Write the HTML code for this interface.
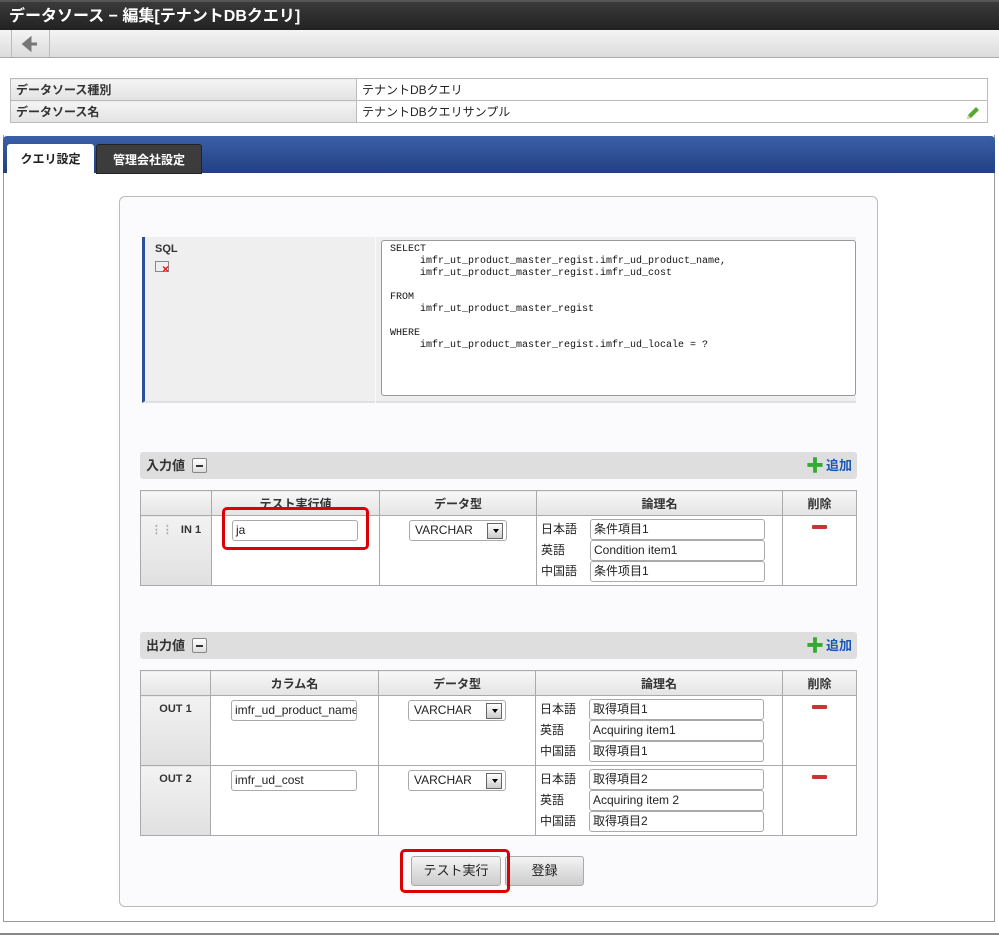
<!DOCTYPE html>
<html><head><meta charset="utf-8"><style>
*{box-sizing:border-box;margin:0;padding:0}
body{width:999px;height:935px;background:#fff;position:relative;overflow:hidden;font-family:"Liberation Sans","Noto Sans CJK JP",sans-serif;font-size:12px;color:#222}
.a{position:absolute}
.title{left:0;top:0;width:999px;height:30px;background:linear-gradient(#3a3a3a,#222);color:#fff;font-size:16px;font-weight:bold;line-height:30px;padding-left:9px;border-top:2px solid #555}
.tool{left:0;top:30px;width:999px;height:28px;background:linear-gradient(#f4f4f4,#dcdcdc);border-bottom:1px solid #aaa}
.back{left:11px;top:30px;width:39px;height:27px;border-left:1px solid #bbb;border-right:1px solid #bbb}
table{border-collapse:collapse}
.info{left:10px;top:78px;width:978px}
.info td{border:1px solid #bbb;height:22px;padding-left:5px;font-size:12px}
.info td.l{background:linear-gradient(#f5f5f5,#e2e2e2);font-weight:bold;width:346px;color:#333}
.frame{left:3px;top:135px;width:992px;height:787px;border:1px solid #999;border-top:none}
.tabbar{left:3px;top:136px;width:992px;height:37px;background:linear-gradient(#3b60a8,#223f82);border-radius:4px 4px 0 0}
.tab{top:144px;height:30px;font-weight:bold;font-size:12px;line-height:30px;text-align:center;border-radius:3px 3px 0 0}
.panel{left:119px;top:196px;width:759px;height:711px;background:#fbfbfe;border:1px solid #bbb;border-radius:6px}
.sqll{left:142px;top:237px;width:233px;height:166px;background:#efefef;border-left:3px solid #2f4e99;border-bottom:2px solid #e0e0e0;padding:6px 10px;font-size:11px;font-weight:bold;color:#333}
.sqlr{left:376px;top:237px;width:480px;height:166px;background:#efefef;border-bottom:2px solid #e0e0e0}
.ta{left:381px;top:240px;width:475px;height:156px;background:#fff;border:1px solid #999;border-radius:3px;font-family:"Liberation Mono",monospace;font-size:10px;line-height:12px;padding:3px 8px;white-space:pre;color:#111}
.sh{left:140px;height:27px;width:717px;background:#dedede;border-radius:3px;font-weight:bold;font-size:13px;line-height:27px;padding-left:6px;color:#333}
.mini{display:inline-block;width:15px;height:15px;border:1px solid #888;background:linear-gradient(#fff,#ddd);vertical-align:-3px;margin-left:3px;position:relative;border-radius:2px}
.mini:after{content:"";position:absolute;left:3px;top:6px;width:7px;height:2px;background:#333}
.add{position:absolute;right:5px;top:0;color:#1a56b5;font-weight:bold;font-size:13px}
.plus{display:inline-block;color:#3a3;font-size:18px;vertical-align:-2px;margin-right:2px}
.grid{width:717px;left:140px}
.grid th{height:25px;border:1px solid #aaa;background:linear-gradient(#f7f7f7,#e4e4e4);font-size:12px;color:#333}
.grid td{border:1px solid #aaa;vertical-align:top;background:#fff}
.grid td.k{background:linear-gradient(#f2f2f2,#e0e0e0);font-weight:bold;font-size:11px;text-align:center;padding-top:7px;color:#333}
.in{display:inline-block;height:21px;border:1px solid #aaa;border-radius:3px;background:#fff;padding:2px 3px;font-size:12px;line-height:15px;white-space:nowrap;overflow:hidden}
.sel{display:inline-block;width:98px;height:21px;border:1px solid #aaa;border-radius:3px;background:#fff;padding:2px 5px;font-size:12px;line-height:15px;position:relative}
.sel:after{content:"";position:absolute;right:3px;top:2px;width:14px;height:14px;border:1px solid #666;background:linear-gradient(#fff,#ccc)}
.sel:before{content:"";position:absolute;right:7px;top:8px;border:3px solid transparent;border-top:4px solid #000;z-index:1}
.lg{font-size:12px;line-height:21px}
.lg div{height:21px;position:relative;padding-left:4px}
.lg .in{position:absolute;left:53px;top:0;width:175px}
.del{display:block;width:15px;height:4px;background:#c33;margin:9px auto 0;border-radius:1px}
.btn{top:856px;height:30px;border:1px solid #aaa;border-radius:3px;background:linear-gradient(#f4f4f4,#ccc);font-size:13px;text-align:center;line-height:28px;color:#222}
.red{border:3px solid #d00;border-radius:5px}
</style></head><body>
<div class="a title">データソース − 編集[テナントDBクエリ]</div>
<div class="a tool"></div>
<div class="a back"><svg width="39" height="27"><path d="M12 14h13M12 14l6-5v10z" stroke="#777" stroke-width="3" fill="#777"/></svg></div>
<table class="a info"><tr><td class="l">データソース種別</td><td>テナントDBクエリ</td></tr><tr><td class="l">データソース名</td><td>テナントDBクエリサンプル<svg style="position:absolute;right:8px;top:27px" width="16" height="16"><path d="M3 13l1-4 8-8 3 3-8 8z" fill="#5a3"/><path d="M3 13l1-4 3 3z" fill="#dca"/></svg></td></tr></table>
<div class="a frame"></div>
<div class="a tabbar"></div>
<div class="a tab" style="left:7px;width:87px;background:#fff;color:#222">クエリ設定</div>
<div class="a tab" style="left:96px;width:106px;background:#3c3c3c;color:#fff;border:1px solid #222">管理会社設定</div>
<div class="a panel"></div>
<div class="a sqll">SQL<div style="margin-top:6px;width:14px;height:11px;border:1px solid #888;background:#eee;position:relative"><span style="position:absolute;left:6px;top:1px;color:#e11;font-size:12px;font-weight:bold;line-height:12px">×</span></div></div>
<div class="a sqlr"></div>
<div class="a ta">SELECT
     imfr_ut_product_master_regist.imfr_ud_product_name,
     imfr_ut_product_master_regist.imfr_ud_cost

FROM
     imfr_ut_product_master_regist

WHERE
     imfr_ut_product_master_regist.imfr_ud_locale = ?</div>

<div class="a sh" style="top:452px">入力値 <span class="mini"></span><span class="add"><span class="plus">✚</span>追加</span></div>
<table class="a grid" style="top:490px">
<tr><th style="width:71px"></th><th style="width:168px">テスト実行値</th><th style="width:157px">データ型</th><th style="width:246px">論理名</th><th>削除</th></tr>
<tr style="height:70px"><td class="k"><span style="color:#aaa;margin-right:8px">⋮⋮</span>IN 1</td><td style="padding:4px 0 0 20px"><span class="in" style="width:126px">ja</span></td><td style="padding:4px 0 0 29px"><span class="sel">VARCHAR</span></td><td class="lg" style="padding-top:3px"><div>日本語<span class="in">条件項目1</span></div><div>英語<span class="in">Condition item1</span></div><div>中国語<span class="in">条件项目1</span></div></td><td><span class="del"></span></td></tr>
</table>
<div class="a red" style="left:222px;top:507px;width:147px;height:43px"></div>

<div class="a sh" style="top:632px">出力値 <span class="mini"></span><span class="add"><span class="plus">✚</span>追加</span></div>
<table class="a grid" style="top:670px">
<tr><th style="width:70px"></th><th style="width:168px">カラム名</th><th style="width:157px">データ型</th><th style="width:247px">論理名</th><th>削除</th></tr>
<tr style="height:70px"><td class="k">OUT 1</td><td style="padding:4px 0 0 20px"><span class="in" style="width:126px">imfr_ud_product_name</span></td><td style="padding:4px 0 0 29px"><span class="sel">VARCHAR</span></td><td class="lg" style="padding-top:3px"><div>日本語<span class="in">取得項目1</span></div><div>英語<span class="in">Acquiring item1</span></div><div>中国語<span class="in">取得項目1</span></div></td><td><span class="del"></span></td></tr>
<tr style="height:70px"><td class="k">OUT 2</td><td style="padding:4px 0 0 20px"><span class="in" style="width:126px">imfr_ud_cost</span></td><td style="padding:4px 0 0 29px"><span class="sel">VARCHAR</span></td><td class="lg" style="padding-top:3px"><div>日本語<span class="in">取得項目2</span></div><div>英語<span class="in">Acquiring item 2</span></div><div>中国語<span class="in">取得項目2</span></div></td><td><span class="del"></span></td></tr>
</table>

<div class="a btn" style="left:411px;width:90px">テスト実行</div>
<div class="a btn" style="left:505px;width:79px">登録</div>
<div class="a red" style="left:400px;top:849px;width:110px;height:44px"></div>
<div class="a" style="left:0;top:933px;width:999px;height:2px;background:#888"></div>
</body></html>
